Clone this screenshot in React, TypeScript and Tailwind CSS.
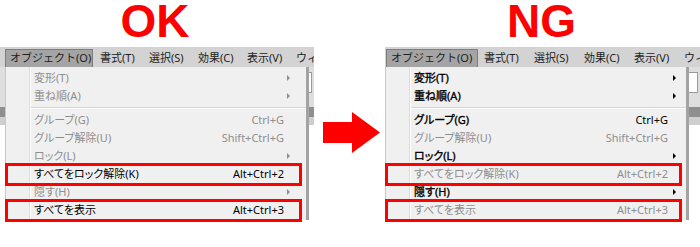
import React from "react";

type Row =
  | { label: string; keys?: string; sub?: boolean; on: boolean; box?: boolean }
  | "sep";

type Dims = {
  hlLeft: number;
  hlW: number;
  ddLeft: number;
};

const jp = "font-['Noto_Sans','Noto_Sans_CJK_JP',sans-serif]";

const okRows: Row[] = [
  { label: "変形(T)", sub: true, on: false },
  { label: "重ね順(A)", sub: true, on: false },
  "sep",
  { label: "グループ(G)", keys: "Ctrl+G", on: false },
  { label: "グループ解除(U)", keys: "Shift+Ctrl+G", on: false },
  { label: "ロック(L)", sub: true, on: false },
  { label: "すべてをロック解除(K)", keys: "Alt+Ctrl+2", on: true, box: true },
  { label: "隠す(H)", sub: true, on: false },
  { label: "すべてを表示", keys: "Alt+Ctrl+3", on: true, box: true },
];

const ngRows: Row[] = [
  { label: "変形(T)", sub: true, on: true },
  { label: "重ね順(A)", sub: true, on: true },
  "sep",
  { label: "グループ(G)", keys: "Ctrl+G", on: true },
  { label: "グループ解除(U)", keys: "Shift+Ctrl+G", on: false },
  { label: "ロック(L)", sub: true, on: true },
  { label: "すべてをロック解除(K)", keys: "Alt+Ctrl+2", on: false, box: true },
  { label: "隠す(H)", sub: true, on: true },
  { label: "すべてを表示", keys: "Alt+Ctrl+3", on: false, box: true },
];

const menus = ["書式(T)", "選択(S)", "効果(C)", "表示(V)", "ウィンドウ(W)"];

function MenuRow({ row, ng }: { row: Row; ng: boolean }) {
  if (row === "sep") {
    return (
      <div className="h-[6px] flex items-center pl-[25px]">
        <div className="h-px w-full bg-[#d5d5d5] border-b border-white box-content" />
      </div>
    );
  }
  const color = row.on ? "text-black" : "text-[#8e8e8e]";
  // NG shot renders enabled labels a little heavier
  const weight = ng && row.on ? "[-webkit-text-stroke:0.35px_black]" : "";
  return (
    <div className="relative h-[18px] flex items-center pl-[28px] whitespace-nowrap">
      <span className={`${color} ${weight} [font-feature-settings:'palt']`}>{row.label}</span>
      {row.keys && (
        <span className={`ml-auto ${ng ? "mr-[18px]" : "mr-[22px]"} ${row.on ? "text-black" : "text-[#8e8e8e]"}`}>
          {row.keys}
        </span>
      )}
      {row.sub && (
        <span
          className={`ml-auto ${ng ? "mr-[10px]" : "mr-[16px]"} w-0 h-0 border-y-[3px] border-y-transparent border-l-[3px] ${
            row.on ? "border-l-black" : "border-l-[#8e8e8e]"
          }`}
        />
      )}
      {row.box && (
        <div className="absolute top-[-2px] bottom-[-3px] left-[-1px] right-[4px] border-[3px] border-[#ff0000]" />
      )}
    </div>
  );
}

function Screen({ rows, ng, dims }: { rows: Row[]; ng: boolean; dims: Dims }) {
  return (
    <div className={`relative ${jp} text-[11px] h-[176px]`}>
      {/* menu bar */}
      <div className="h-[20px] bg-[#d3d3d3] flex items-end text-[#1e1e1e] overflow-hidden whitespace-nowrap">
        <div
          className="h-[18px] shrink-0 bg-[#a4a4a4] border border-b-0 border-[#7d7d7d] flex items-center pl-[4px]"
          style={{ marginLeft: dims.hlLeft, width: dims.hlW }}
        >
          オブジェクト(O)
        </div>
        {menus.map((m) => (
          <div key={m} className={`h-[18px] flex items-center shrink-0 ${ng ? "w-[50px] pl-[6px]" : "w-[49px] pl-[7px]"}`}>
            {m}
          </div>
        ))}
      </div>
      {/* app content behind the menu */}
      <div className="flex flex-col">
        <div className="h-[40px] bg-[#dedede] flex justify-end items-start pt-[5px]">
          <div className="w-[12px] h-[21px] bg-white border border-[#9a9a9a] mr-[2px]" />
        </div>
        <div className="h-[10px] bg-[#8f8f8f]" />
        <div className="h-[8px] bg-[#cfcfcf]" />
      </div>
      {/* dropdown */}
      <div
        className="absolute top-[20px] w-[304px] bg-[#f0f0f0] border-l border-[#c8c8c8] border-r-[3px] border-r-[#a3a3a3] pt-[2px] pb-[1px]"
        style={{ left: dims.ddLeft }}
      >
        <div className="absolute top-0 bottom-0 left-[23px] w-[2px] border-l border-[#dcdcdc] bg-white" />
        {rows.map((r, i) => (
          <MenuRow key={i} row={r} ng={ng} />
        ))}
      </div>
    </div>
  );
}

export default function App() {
  return (
    <div className="w-[700px] h-[247px] bg-white flex overflow-hidden">
      <div className="w-[314px] shrink-0">
        <div className="w-[310px] h-[47px] text-center text-[46px] leading-[42px] font-bold text-[#ff0000] font-['Liberation_Sans',Arial,sans-serif]">
          OK
        </div>
        <Screen rows={okRows} ng={false} dims={{ hlLeft: 5, hlW: 88, ddLeft: 5 }} />
      </div>
      <div className="w-[69px] shrink-0 pt-[112px] pl-[9px]">
        <svg width="57" height="41" viewBox="0 0 57 41">
          <polygon points="0,10 29,10 29,0 57,20.5 29,41 29,31 0,31" fill="#ff0000" />
        </svg>
      </div>
      <div className="flex-1 overflow-hidden">
        <div className="w-[317px] h-[47px] text-center text-[46px] leading-[42px] font-bold text-[#ff0000] font-['Liberation_Sans',Arial,sans-serif]">
          NG
        </div>
        <div className="ml-[2px]">
          <Screen rows={ngRows} ng={true} dims={{ hlLeft: 1, hlW: 92, ddLeft: 0 }} />
        </div>
      </div>
    </div>
  );
}
